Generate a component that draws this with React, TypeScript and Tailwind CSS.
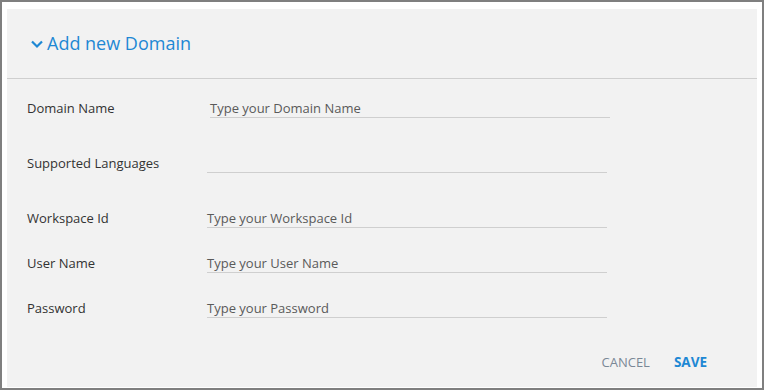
import React from "react";

const font = { fontFamily: '"Open Sans", "Noto Sans", sans-serif' };

function Row({
  label,
  placeholder,
  className,
  inputClass,
}: {
  label: string;
  placeholder: string;
  className?: string;
  inputClass?: string;
}) {
  return (
    <div className={"flex items-center " + (className ?? "")}>
      <div className="w-[180px] text-[13px] font-medium leading-[19px] text-[#333333]">
        {label}
      </div>
      <div
        className={
          "h-[19px] w-[400px] border-b border-[#cfcfcf] text-[13px] leading-[18px] text-[#5a5a5a] " +
          (inputClass ?? "")
        }
      >
        {placeholder}
      </div>
    </div>
  );
}

export default function App() {
  return (
    <div
      style={font}
      className="h-[390px] w-[764px] border-2 border-[#7f7f7f] bg-white px-[5px] pb-[1px] pt-[7px]"
    >
      <div className="flex h-full flex-col bg-[#f2f2f2]">
        <div className="flex h-[70px] items-center border-b border-[#cfcfcf] pb-[1px] pl-[24px]">
          <svg
            width="12"
            height="12"
            viewBox="0 0 12 12"
            className="mr-[4px] mt-[1px]"
          >
            <path
              d="M1 3.5 L6 8.5 L11 3.5"
              fill="none"
              stroke="#1e88d4"
              strokeWidth="2.2"
            />
          </svg>
          <span className="text-[18px] leading-[24px] text-[#1e88d4]">
            Add new Domain
          </span>
        </div>
        <div className="flex flex-col pl-[20px] pt-[20px]">
          <Row
            label="Domain Name"
            placeholder="Type your Domain Name"
            inputClass="ml-[3px]"
          />
          <Row label="Supported Languages" placeholder="" className="mt-[36px]" />
          <Row
            label="Workspace Id"
            placeholder="Type your Workspace Id"
            className="mt-[36px]"
          />
          <Row
            label="User Name"
            placeholder="Type your User Name"
            className="mt-[26px]"
          />
          <Row
            label="Password"
            placeholder="Type your Password"
            className="mt-[26px]"
          />
        </div>
        <div className="mt-[35px] flex items-center justify-end gap-[24px] pr-[50px] text-[13px] leading-[18px]">
          <span className="text-[#7a8896]">CANCEL</span>
          <span className="text-[13.5px] font-bold text-[#1e88d4]">SAVE</span>
        </div>
      </div>
    </div>
  );
}
